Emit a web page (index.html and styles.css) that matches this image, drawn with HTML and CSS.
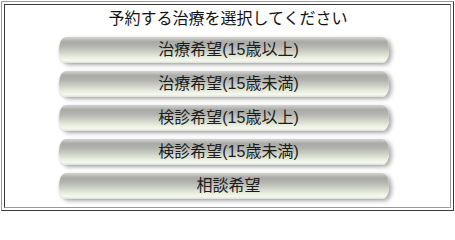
FILE: index.html
```html
<!DOCTYPE html>
<html lang="ja">
<head>
<meta charset="utf-8">
<title>予約する治療を選択してください</title>
<link rel="stylesheet" href="styles.css">
</head>
<body>
<div class="frame">
  <div class="panel">
    <div class="title">予約する治療を選択してください</div>
    <a class="btn" href="#">治療希望(15歳以上)</a>
    <a class="btn" href="#">治療希望(15歳未満)</a>
    <a class="btn" href="#">検診希望(15歳以上)</a>
    <a class="btn" href="#">検診希望(15歳未満)</a>
    <a class="btn" href="#">相談希望</a>
  </div>
</div>
</body>
</html>
```
FILE: styles.css
```css
html, body {
  margin: 0;
  padding: 0;
  background: #ffffff;
}
body {
  padding: 1px;
  font-family: "Liberation Sans", "Noto Sans CJK JP", sans-serif;
}
.frame {
  box-sizing: border-box;
  width: 453px;
  height: 210px;
  padding: 2px;
  border: 1px solid;
  border-color: #9a9a9a #3a3a3a #3a3a3a #9a9a9a;
}
.panel {
  box-sizing: border-box;
  height: 100%;
  border: 1px solid;
  border-color: #3a3a3a #9a9a9a #9a9a9a #3a3a3a;
  padding-top: 4px;
  display: flex;
  flex-direction: column;
  align-items: center;
  gap: 8px;
}
.title {
  font-size: 16px;
  line-height: 20px;
  color: #111111;
  padding-left: 1px;
}
.btn {
  box-sizing: border-box;
  width: 330px;
  height: 26px;
  margin-right: 8px;
  padding-left: 10px;
  display: block;
  text-align: center;
  font-size: 16px;
  line-height: 26px;
  color: #1c1c1c;
  text-decoration: none;
  border-radius: 7px / 12px;
  background: linear-gradient(to bottom,
    #d4d4d2 0%,
    #a9aaa6 18%,
    #b2b3ae 35%,
    #cfd2c8 58%,
    #e9eedf 78%,
    #f4f8ee 90%,
    #dfe1da 100%);
  box-shadow: 3px 2px 4px rgba(0, 0, 0, 0.32), -1px 1px 2px rgba(0, 0, 0, 0.08);
}
```
